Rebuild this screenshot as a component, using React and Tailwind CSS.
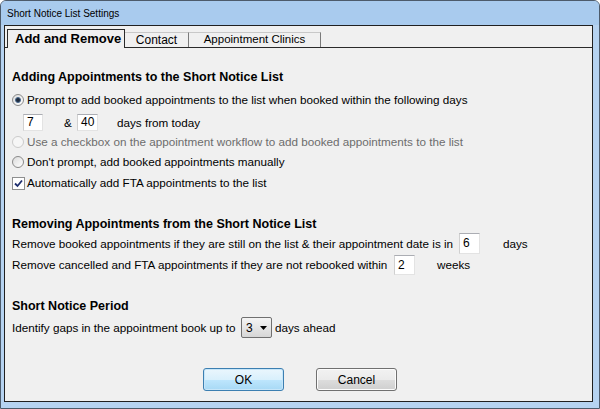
import React from "react";

function Radio({ checked, disabled }) {
  return (
    <span
      className={
        disabled
          ? "w-[12px] h-[12px] shrink-0 rounded-full border border-[#cbcbcb] bg-[#f6f6f6] flex items-center justify-center"
          : "w-[12px] h-[12px] shrink-0 rounded-full border border-[#8a8a8a] bg-[linear-gradient(135deg,#dcdcdc,#ffffff)] flex items-center justify-center"
      }
    >
      {checked && <span className="w-[6px] h-[6px] rounded-full bg-[#1f2b3d] border border-[#4a6a90]" />}
    </span>
  );
}

function Checkbox() {
  return (
    <span className="w-[13px] h-[13px] shrink-0 border border-[#8e8f8f] bg-white flex items-center justify-center">
      <svg width="9" height="9" viewBox="0 0 9 9">
        <path d="M1 4.5 L3.5 7 L8 1.5" fill="none" stroke="#1e2e6e" strokeWidth="1.8" />
      </svg>
    </span>
  );
}

function Field({ value, w }) {
  return (
    <span className={`${w} h-full bg-white border border-[#e3e3e3] border-t-[#abadb3] border-l-[#d0d0d0] pl-[3px] text-[12px] leading-[17px] flex items-center`}>
      {value}
    </span>
  );
}

export default function App() {
  return (
    <div className="w-[600px] h-[409px] bg-[#b6d3f1] rounded-t-[6px] border border-[#4d5b6b] flex flex-col overflow-hidden font-['Liberation_Sans',Arial,sans-serif] text-black">
      {/* Title bar */}
      <div className="h-[24px] bg-[#a9cbee] flex items-center pl-[6px] text-[10px]">
        Short Notice List Settings
      </div>

      {/* Client area */}
      <div className="flex-1 ml-[3px] mr-[6px] mb-[6px] border border-[#202020] bg-[#f0f0f0] flex flex-col">
        {/* Tab strip */}
        <div className="h-[22px] shrink-0 flex items-end border-b border-[#2a2a2a] pl-[2px]">
          <div className="relative -mb-px h-[19px] w-[118px] border border-b-0 border-[#2a2a2a] bg-[#f0f0f0] flex items-center pl-[7px] text-[13px] font-bold">
            Add and Remove
          </div>
          <div className="h-[15px] w-[64px] border-t border-r border-t-[#c8c8c8] border-r-[#7a7a7a] flex items-center justify-center text-[12px]">
            Contact
          </div>
          <div className="h-[15px] w-[132px] border-t border-r border-t-[#c8c8c8] border-r-[#7a7a7a] flex items-center justify-center text-[11.5px]">
            Appointment Clinics
          </div>
        </div>

        {/* Tab page */}
        <div className="flex flex-col pl-[7px] pt-[21px] text-[11.7px]">
          <div className="h-[16px] flex items-center text-[12.5px] font-bold">
            Adding Appointments to the Short Notice List
          </div>

          <div className="mt-[7px] h-[16px] flex items-center gap-[3px]">
            <Radio checked />
            <span>Prompt to add booked appointments to the list when booked within the following days</span>
          </div>

          <div className="mt-[6px] h-[17px] flex items-center pl-[11px]">
            <Field value="7" w="w-[20px]" />
            <span className="ml-[21px] w-[13px]">&amp;</span>
            <Field value="40" w="w-[21px]" />
            <span className="ml-[19px]">days from today</span>
          </div>

          <div className="mt-[3px] h-[16px] flex items-center gap-[3px] text-[#6d6d6d]">
            <Radio disabled />
            <span>Use a checkbox on the appointment workflow to add booked appointments to the list</span>
          </div>

          <div className="mt-[4px] h-[16px] flex items-center gap-[3px]">
            <Radio />
            <span>Don't prompt, add booked appointments manually</span>
          </div>

          <div className="mt-[5px] h-[16px] flex items-center gap-[2px]">
            <Checkbox />
            <span>Automatically add FTA appointments to the list</span>
          </div>

          <div className="mt-[25px] h-[16px] flex items-center text-[12.5px] font-bold">
            Removing Appointments from the Short Notice List
          </div>

          <div className="mt-[1px] h-[21px] flex items-center">
            <span className="w-[447px]">Remove booked appointments if they are still on the list &amp; their appointment date is in</span>
            <Field value="6" w="w-[21px]" />
            <span className="ml-[23px]">days</span>
          </div>

          <div className="mt-[1px] h-[20px] flex items-center">
            <span className="w-[382px]">Remove cancelled and FTA appointments if they are not rebooked within</span>
            <Field value="2" w="w-[21px]" />
            <span className="ml-[22px]">weeks</span>
          </div>

          <div className="mt-[23px] h-[16px] flex items-center text-[12.5px] font-bold">
            Short Notice Period
          </div>

          <div className="mt-[3px] h-[21px] flex items-center">
            <span className="w-[229px]">Identify gaps in the appointment book up to</span>
            <span className="w-[31px] h-full border border-[#707070] rounded-[2px] bg-[linear-gradient(#f4f4f4,#e6e6e6_50%,#d6d6d6)] flex items-center justify-between pl-[4px] pr-[4px] text-[12px]">
              3
              <svg width="7" height="4" viewBox="0 0 7 4">
                <path d="M0 0 H7 L3.5 4 Z" fill="#000" />
              </svg>
            </span>
            <span className="ml-[3px]">days ahead</span>
          </div>

          <div className="mt-[30px] h-[23px] flex items-center pl-[191px] gap-[32px] text-[12px]">
            <button className="w-[81px] h-full rounded-[3px] border border-[#3c7fb1] bg-[linear-gradient(#eaf6fd,#d9f0fc_50%,#bee6fd_51%,#a7d9f5)] shadow-[inset_0_0_0_1px_#c7e6f9]">
              OK
            </button>
            <button className="w-[81px] h-full rounded-[3px] border border-[#707070] bg-[linear-gradient(#f2f2f2,#ebebeb_50%,#dddddd_51%,#cfcfcf)] shadow-[inset_0_0_0_1px_#fcfcfc]">
              Cancel
            </button>
          </div>
        </div>
      </div>
    </div>
  );
}
